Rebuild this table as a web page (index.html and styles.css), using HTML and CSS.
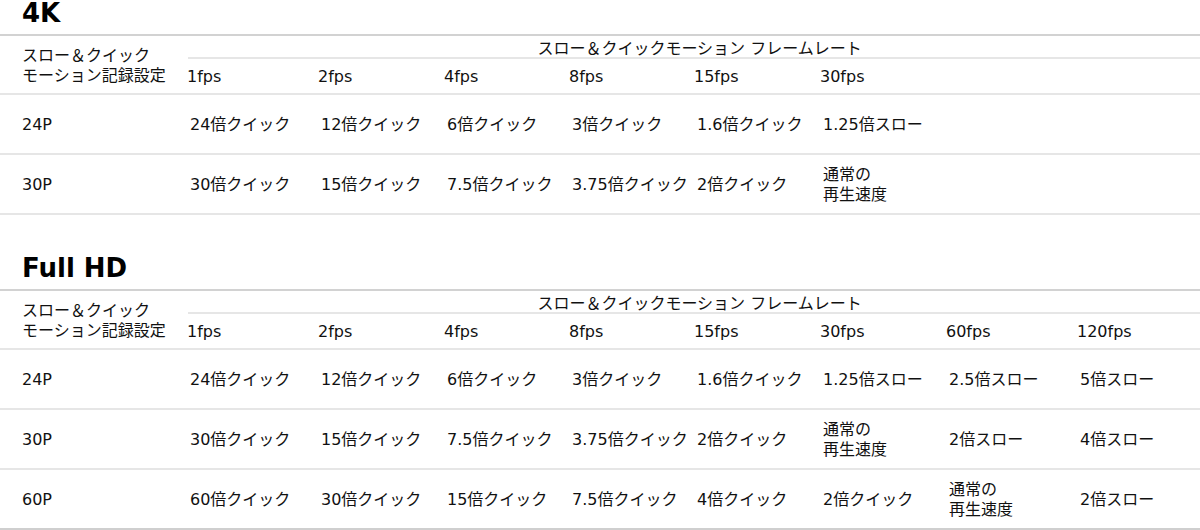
FILE: index.html
```html
<!DOCTYPE html>
<html lang="ja">
<head>
<meta charset="utf-8">
<title>スロー＆クイックモーション</title>
<link rel="stylesheet" href="styles.css">
</head>
<body>
<section class="block">
  <h2 class="heading">4K</h2>
  <table class="spec">
    <colgroup>
      <col class="c-label"><col class="c1"><col class="c2"><col class="c3"><col class="c4"><col class="c5"><col class="c6"><col class="c7"><col class="c8">
    </colgroup>
    <thead>
      <tr class="r-head1">
        <th class="label" rowspan="2">スロー＆クイック<br>モーション記録設定</th>
        <th class="fr" colspan="8"><div class="fr-inner">スロー＆クイックモーション フレームレート</div></th>
      </tr>
      <tr class="r-head2">
        <th class="fps">1fps</th><th class="fps">2fps</th><th class="fps">4fps</th><th class="fps">8fps</th><th class="fps">15fps</th><th class="fps">30fps</th><th class="fps"></th><th class="fps"></th>
      </tr>
    </thead>
    <tbody>
      <tr>
        <th class="rowlabel">24P</th>
        <td>24倍クイック</td><td>12倍クイック</td><td>6倍クイック</td><td>3倍クイック</td><td>1.6倍クイック</td><td>1.25倍スロー</td><td></td><td></td>
      </tr>
      <tr>
        <th class="rowlabel">30P</th>
        <td>30倍クイック</td><td>15倍クイック</td><td>7.5倍クイック</td><td>3.75倍クイック</td><td>2倍クイック</td><td>通常の<br>再生速度</td><td></td><td></td>
      </tr>
    </tbody>
  </table>
</section>

<section class="block block-fhd">
  <h2 class="heading">Full HD</h2>
  <table class="spec spec-last">
    <colgroup>
      <col class="c-label"><col class="c1"><col class="c2"><col class="c3"><col class="c4"><col class="c5"><col class="c6"><col class="c7"><col class="c8">
    </colgroup>
    <thead>
      <tr class="r-head1">
        <th class="label" rowspan="2">スロー＆クイック<br>モーション記録設定</th>
        <th class="fr" colspan="8"><div class="fr-inner">スロー＆クイックモーション フレームレート</div></th>
      </tr>
      <tr class="r-head2">
        <th class="fps">1fps</th><th class="fps">2fps</th><th class="fps">4fps</th><th class="fps">8fps</th><th class="fps">15fps</th><th class="fps">30fps</th><th class="fps">60fps</th><th class="fps">120fps</th>
      </tr>
    </thead>
    <tbody>
      <tr>
        <th class="rowlabel">24P</th>
        <td>24倍クイック</td><td>12倍クイック</td><td>6倍クイック</td><td>3倍クイック</td><td>1.6倍クイック</td><td>1.25倍スロー</td><td>2.5倍スロー</td><td>5倍スロー</td>
      </tr>
      <tr>
        <th class="rowlabel">30P</th>
        <td>30倍クイック</td><td>15倍クイック</td><td>7.5倍クイック</td><td>3.75倍クイック</td><td>2倍クイック</td><td>通常の<br>再生速度</td><td>2倍スロー</td><td>4倍スロー</td>
      </tr>
      <tr class="last">
        <th class="rowlabel">60P</th>
        <td>60倍クイック</td><td>30倍クイック</td><td>15倍クイック</td><td>7.5倍クイック</td><td>4倍クイック</td><td>2倍クイック</td><td>通常の<br>再生速度</td><td>2倍スロー</td>
      </tr>
    </tbody>
  </table>
</section>
</body>
</html>
```

FILE: styles.css
```css
html, body {
  margin: 0;
  padding: 0;
  background: #fff;
}

body {
  width: 1200px;
  color: #111;
  font-family: "DejaVu Sans", "Noto Sans CJK JP", sans-serif;
  font-size: 16px;
}

.block-fhd {
  margin-top: 40px;
}

.heading {
  margin: 0;
  padding: 0 0 8px 22px;
  font-family: "DejaVu Sans", "Noto Sans CJK JP", sans-serif;
  font-weight: 700;
  font-size: 26px;
  line-height: 26px;
  color: #000;
  border-bottom: 2px solid #d2d2d2;
}

.spec {
  width: 1200px;
  table-layout: fixed;
  border-collapse: separate;
  border-spacing: 0;
}

.c-label { width: 185px; }
.c1 { width: 131px; }
.c2 { width: 126px; }
.c3 { width: 125px; }
.c4 { width: 125px; }
.c5 { width: 126px; }
.c6 { width: 126px; }
.c7 { width: 131px; }
.c8 { width: 125px; }

.spec th,
.spec td {
  padding: 2px 0 0 0;
  font-weight: 400;
  text-align: left;
  vertical-align: middle;
  line-height: 20px;
  white-space: nowrap;
}

.label {
  padding-left: 22px !important;
  border-bottom: 2px solid #e6e6e6;
}

.fr {
  height: 23px;
  padding: 0 !important;
}

.fr-inner {
  margin-left: 3px;
  height: 21px;
  line-height: 21px;
  padding-top: 2px;
  padding-left: 11px;
  box-sizing: border-box;
  height: 23px;
  text-align: center;
  border-bottom: 2px solid #e6e6e6;
}

.fps {
  height: 32px;
  padding-left: 2px !important;
  border-bottom: 2px solid #e6e6e6;
}

.spec tbody th,
.spec tbody td {
  height: 56px;
  border-bottom: 2px solid #e6e6e6;
}

.spec tbody td {
  padding-left: 5px;
}

.rowlabel {
  padding-left: 22px !important;
}

.spec-last tr.last th,
.spec-last tr.last td {
  border-bottom-color: #cfcfcf;
}
```
